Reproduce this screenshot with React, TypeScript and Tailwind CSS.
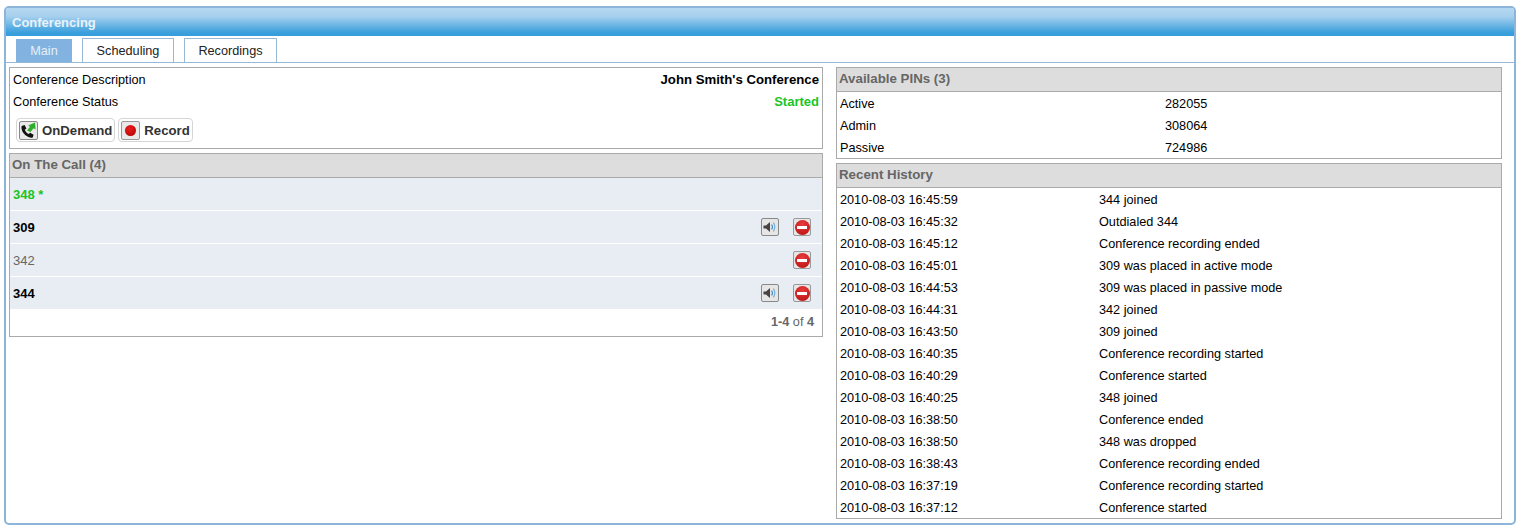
import React from "react";

const pins = [
  ["Active", "282055"],
  ["Admin", "308064"],
  ["Passive", "724986"],
];

const history = [
  ["2010-08-03 16:45:59", "344 joined"],
  ["2010-08-03 16:45:32", "Outdialed 344"],
  ["2010-08-03 16:45:12", "Conference recording ended"],
  ["2010-08-03 16:45:01", "309 was placed in active mode"],
  ["2010-08-03 16:44:53", "309 was placed in passive mode"],
  ["2010-08-03 16:44:31", "342 joined"],
  ["2010-08-03 16:43:50", "309 joined"],
  ["2010-08-03 16:40:35", "Conference recording started"],
  ["2010-08-03 16:40:29", "Conference started"],
  ["2010-08-03 16:40:25", "348 joined"],
  ["2010-08-03 16:38:50", "Conference ended"],
  ["2010-08-03 16:38:50", "348 was dropped"],
  ["2010-08-03 16:38:43", "Conference recording ended"],
  ["2010-08-03 16:37:19", "Conference recording started"],
  ["2010-08-03 16:37:12", "Conference started"],
];

function PhoneIcon() {
  return (
    <span className="flex h-[19px] w-[19px] items-center justify-center rounded-[2px] border border-[#888] bg-[#e9e9e9]">
      <svg width="17" height="17" viewBox="0 0 17 17">
        <path
          d="M1.6 4 L4.6 3 L6.4 6.6 L4.8 7.8 C5.4 9.6 6.8 11 8.6 12 L10.1 10.8 L13.6 12.8 L12.7 15.4 C11.3 16.1 9 15.7 6.7 14.1 C3.3 11.8 0.8 8 1.6 4 Z"
          fill="#111"
        />
        <path d="M7 8.6 L10 4.8 L8.2 3.6 L15 0.6 L15.6 7.6 L13.6 6.2 L10.4 10 Z" fill="#2fae2c" />
      </svg>
    </span>
  );
}

function RecordIcon() {
  return (
    <span className="flex h-[19px] w-[19px] items-center justify-center rounded-[2px] border border-[#999] bg-[#e9e9e9]">
      <span className="h-[11px] w-[11px] rounded-full bg-[radial-gradient(circle_at_40%_35%,#ee1c1c,#a80000)]" />
    </span>
  );
}

function SpeakerButton() {
  return (
    <span className="flex h-[18px] w-[18px] items-center justify-center rounded-[2px] border border-[#888] bg-[#e6e6e6]">
      <svg width="16" height="16" viewBox="0 0 16 16">
        <path d="M1.5 6.5 H4 L8 3 V13 L4 9.5 H1.5 Z" fill="#444" />
        <path d="M9.6 5.5 C10.6 7 10.6 9 9.6 10.5" fill="none" stroke="#4b8fca" strokeWidth="1.2" />
        <path d="M11.4 3.5 C13.2 6.5 13.2 9.5 11.4 12.5" fill="none" stroke="#74aeda" strokeWidth="1.2" />
      </svg>
    </span>
  );
}

function DropButton() {
  return (
    <span className="flex h-[18px] w-[18px] items-center justify-center rounded-[2px] border border-[#999] bg-[#e6e6e6]">
      <span className="flex h-[15px] w-[15px] items-center justify-center rounded-full bg-[radial-gradient(circle_at_50%_30%,#e83c3c,#b80d0d)]">
        <span className="h-[3px] w-[10px] bg-white" />
      </span>
    </span>
  );
}

function ActionButton({ icon, label }: { icon: React.ReactNode; label: string }) {
  return (
    <span className="flex h-[24px] items-center gap-[3px] rounded-[4px] border border-[#d5d5d5] bg-white pl-[2px] pr-[2px] text-[13.2px] font-bold text-[#333]">
      {icon}
      <span className="pl-px pt-px">{label}</span>
    </span>
  );
}

function SectionHeader({ title }: { title: string }) {
  return (
    <div className="flex h-[24px] items-center border-b border-[#aaa] bg-[#dddddd] pb-[2px] pl-[2px] text-[13.3px] font-bold text-[#666]">
      {title}
    </div>
  );
}

function CallRow({ name, speaker, drop = true, tone }: { name: string; speaker?: boolean; drop?: boolean; tone: string }) {
  return (
    <div className="mb-px flex h-[32px] items-center justify-between bg-[#e8edf4] pl-[3px]">
      <span className={`pt-[2px] ${tone}`}>{name}</span>
      <span className="mr-[11px] flex items-center gap-[14px]">
        {speaker && <SpeakerButton />}
        {drop && <DropButton />}
      </span>
    </div>
  );
}

export default function App() {
  return (
    <div className="h-[530px] w-[1520px] bg-white pl-[4px] pt-[6px] font-['Liberation_Sans',Arial,sans-serif] text-[12.7px] text-black">
      <div className="h-[519px] w-[1512px] overflow-hidden rounded-[5px] border-2 border-[#8cb5d9]">
        <div className="flex h-[28px] items-center bg-[linear-gradient(to_bottom,#b5d8f1_0%,#a6d0ee_30%,#3a9fdc_88%,#359cdb_100%)] pl-[6px] pt-[2px] text-[13px] font-bold text-[#e8f3fb]">
          Conferencing
        </div>

        <div className="flex h-[27px] items-end gap-[10px] border-b border-[#97b9d8] pl-[10px]">
          <div className="flex h-[23px] w-[56px] items-center justify-center bg-[#82b3e0] pt-[2px] text-[#e4eff8]">Main</div>
          <div className="flex h-[24px] w-[92px] items-center justify-center border border-b-0 border-[#97b9d8] pt-[2px] text-[#222]">Scheduling</div>
          <div className="flex h-[24px] w-[93px] items-center justify-center border border-b-0 border-[#97b9d8] pt-[2px] text-[#222]">Recordings</div>
        </div>

        <div className="flex items-start gap-[13px] pl-[3px] pt-[4px]">
          <div className="flex w-[814px] flex-col gap-[4px]">
            <div className="h-[82px] border border-[#aaa] px-[3px] pt-px">
              <div className="flex h-[22px] items-center justify-between pt-[2px]">
                <span>Conference Description</span>
                <span className="mb-[2px] text-[13.2px] font-bold">John Smith's Conference</span>
              </div>
              <div className="flex h-[22px] items-center justify-between pt-[2px]">
                <span>Conference Status</span>
                <span className="mb-[2px] text-[13px] font-bold text-[#19c427]">Started</span>
              </div>
              <div className="mt-[5px] flex gap-[3px] pl-[3px]">
                <ActionButton icon={<PhoneIcon />} label="OnDemand" />
                <ActionButton icon={<RecordIcon />} label="Record" />
              </div>
            </div>

            <div className="h-[184px] border border-[#aaa]">
              <SectionHeader title="On The Call (4)" />
              <CallRow name="348 *" drop={false} tone="text-[13px] font-bold text-[#19c427]" />
              <CallRow name="309" speaker tone="text-[13px] font-bold text-black" />
              <CallRow name="342" tone="text-[13px] text-[#666]" />
              <CallRow name="344" speaker tone="text-[13px] font-bold text-black" />
              <div className="flex h-[26px] items-center justify-end pr-[8px] text-[#666]">
                <span>
                  <b>1-4</b> of <b>4</b>
                </span>
              </div>
            </div>
          </div>

          <div className="flex w-[666px] flex-col gap-[4px]">
            <div className="h-[92px] border border-[#aaa]">
              <SectionHeader title="Available PINs (3)" />
              {pins.map(([label, pin]) => (
                <div key={label} className="flex h-[22px] items-center pl-[3px] pt-[3px]">
                  <span className="w-[325px]">{label}</span>
                  <span>{pin}</span>
                </div>
              ))}
            </div>

            <div className="h-[356px] border border-[#aaa]">
              <SectionHeader title="Recent History" />
              {history.map(([time, event], i) => (
                <div key={i} className="flex h-[22px] items-center pl-[3px] pt-[3px]">
                  <span className="w-[259px]">{time}</span>
                  <span>{event}</span>
                </div>
              ))}
            </div>
          </div>
        </div>
      </div>
    </div>
  );
}
